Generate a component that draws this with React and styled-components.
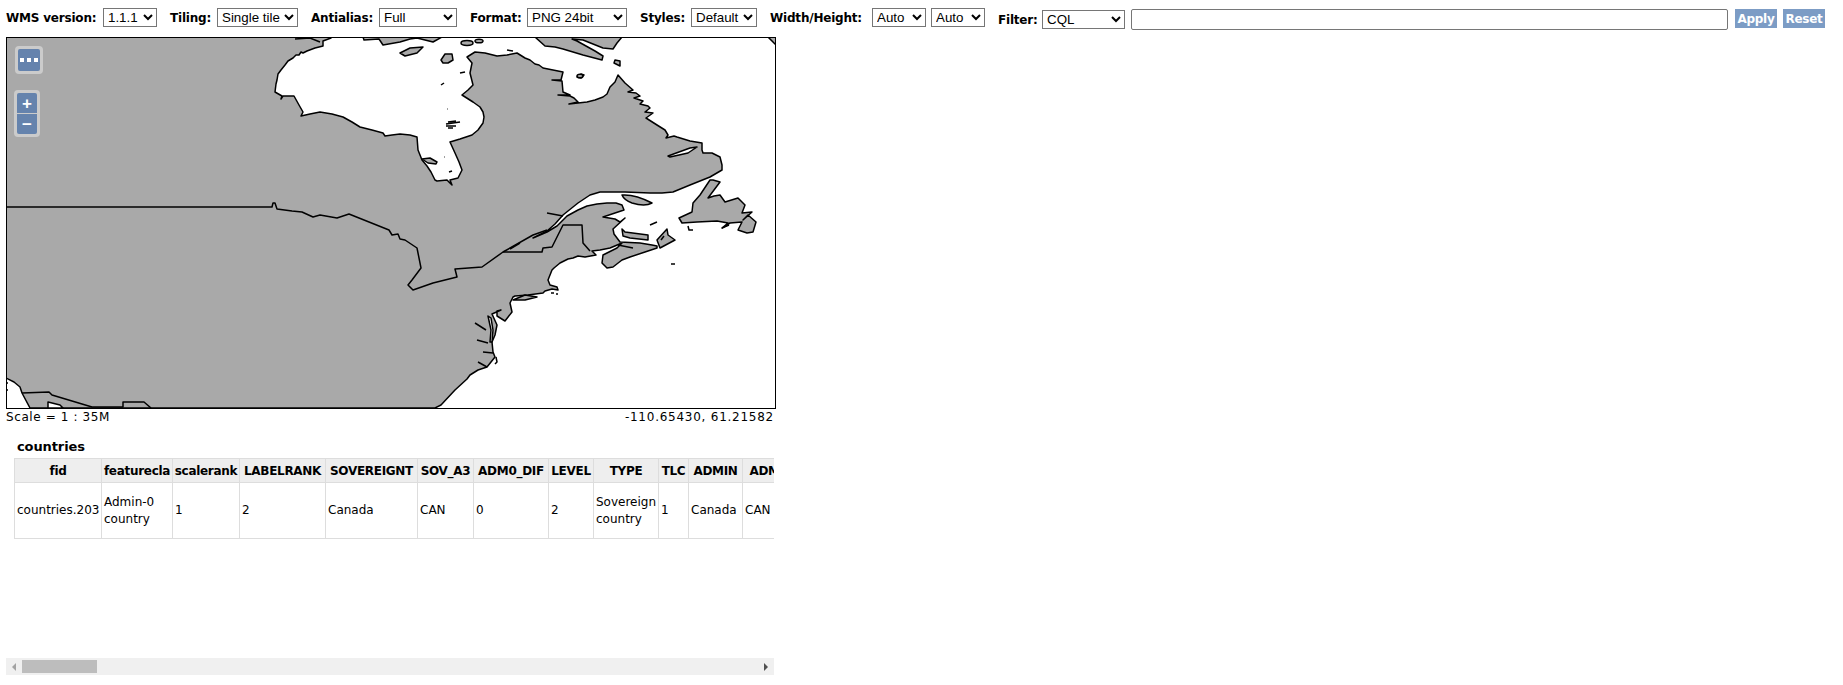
import React from 'react';
import styled, { createGlobalStyle } from 'styled-components';

const GlobalStyle = createGlobalStyle`
  html, body {
    margin: 0;
    background: #fff;
    color: #000;
    font-family: "DejaVu Sans", Verdana, sans-serif;
  }
`;

const Page = styled.div`
  width: 1843px;
  height: 685px;
  overflow: hidden;
`;

const Toolbar = styled.form`
  display: flex;
  align-items: flex-start;
  height: 37px;
  padding: 8px 0 0 6px;
  box-sizing: border-box;
`;

const Field = styled.div`
  display: flex;
  align-items: center;
  gap: 5px;
  margin-right: ${props => props.$gap ?? 13}px;
  margin-top: ${props => props.$top ?? 0}px;
`;

const Label = styled.label`
  width: ${props => props.$w}px;
  font-size: 12px;
  font-weight: bold;
  white-space: nowrap;
  letter-spacing: -0.2px;
`;

const Select = styled.select`
  width: ${props => props.$w}px;
  height: 19px;
  padding: 0;
  box-sizing: border-box;
  background: #fff;
  font-family: "Liberation Sans", Arial, sans-serif;
  font-size: 13.33px;
`;

const FilterInput = styled.input`
  width: 597px;
  height: 21px;
  margin: 1px 7px 0 1px;
  padding: 0 2px;
  box-sizing: border-box;
  border: 1px solid #767676;
  border-radius: 2px;
`;

const FormButton = styled.button`
  width: 42px;
  height: 19px;
  margin: 1px 6px 0 0;
  padding: 0;
  border: 0;
  background: #7c9cc5;
  color: #fff;
  font-family: "DejaVu Sans", Verdana, sans-serif;
  font-size: 12px;
  font-weight: bold;
  letter-spacing: -0.3px;
`;

const MapFrame = styled.div`
  position: relative;
  width: 768px;
  height: 370px;
  margin-left: 6px;
  border: 1px solid #000;
`;

const MapDrawing = styled.svg`
  display: block;
  width: 768px;
  height: 370px;
`;

const Control = styled.div`
  position: absolute;
  left: ${props => props.$left}px;
  top: ${props => props.$top}px;
  display: flex;
  flex-direction: column;
  gap: 1px;
  padding: 3px;
  border-radius: 4px;
  background: rgba(255, 255, 255, 0.4);
`;

const ControlButton = styled.button`
  display: flex;
  align-items: center;
  justify-content: center;
  gap: 3px;
  width: ${props => props.$w ?? 20}px;
  height: ${props => props.$h ?? 20}px;
  padding: 0;
  border: 0;
  border-radius: ${props => props.$radius ?? '2px'};
  background: #6583ad;
  color: #fff;
  font-family: "Liberation Sans", Arial, sans-serif;
  font-size: 17px;
  font-weight: bold;
  line-height: 1;
`;

const Dot = styled.span`
  width: 4px;
  height: 4px;
  background: #fff;
`;

const StatusRow = styled.div`
  display: flex;
  justify-content: space-between;
  width: 768px;
  height: 29px;
  margin-left: 6px;
  padding-top: 1px;
  box-sizing: border-box;
  font-size: 12px;
`;

const StatusText = styled.span`
  letter-spacing: ${props => props.$spacing}px;
`;

const Results = styled.div`
  width: 760px;
  height: 220px;
  margin-left: 14px;
  overflow: hidden;
`;

const ResultsTitle = styled.h3`
  height: 20px;
  margin: 0 0 0 3px;
  font-size: 13px;
  line-height: 17px;
  letter-spacing: -0.1px;
`;

const DataTable = styled.table`
  table-layout: fixed;
  width: ${props => props.$w}px;
  border-collapse: collapse;
  font-size: 12px;
`;

const HeadCell = styled.th`
  width: ${props => props.$w}px;
  height: 24px;
  padding: 0 1px;
  box-sizing: border-box;
  border: 1px solid #ddd;
  background: #eee;
  text-align: center;
  white-space: nowrap;
  letter-spacing: -0.3px;
  overflow: hidden;
`;

const BodyCell = styled.td`
  height: 56px;
  padding: 0 2px;
  box-sizing: border-box;
  border: 1px solid #ddd;
  line-height: 17px;
  overflow: hidden;
`;

const Scrollbar = styled.div`
  display: flex;
  align-items: center;
  justify-content: space-between;
  width: 768px;
  height: 17px;
  margin-left: 6px;
  background: #f0f0f0;
`;

const ScrollThumb = styled.div`
  width: 75px;
  height: 13px;
  margin-left: 6px;
  background: #bdbdbd;
`;

const ScrollArrow = styled.span`
  width: 0;
  height: 0;
  border-top: 4px solid transparent;
  border-bottom: 4px solid transparent;
  ${props => props.$dir === 'left'
    ? 'margin-left: 6px; border-right: 4px solid #a3a3a3;'
    : 'margin-right: 6px; border-left: 4px solid #505050;'}
`;

const ScrollStart = styled.div`
  display: flex;
  align-items: center;
`;

const columns = [
  { name: 'fid', width: 87, value: 'countries.203' },
  { name: 'featurecla', width: 71, value: 'Admin-0 country' },
  { name: 'scalerank', width: 67, value: '1' },
  { name: 'LABELRANK', width: 86, value: '2' },
  { name: 'SOVEREIGNT', width: 92, value: 'Canada' },
  { name: 'SOV_A3', width: 56, value: 'CAN' },
  { name: 'ADM0_DIF', width: 75, value: '0' },
  { name: 'LEVEL', width: 45, value: '2' },
  { name: 'TYPE', width: 65, value: 'Sovereign country' },
  { name: 'TLC', width: 30, value: '1' },
  { name: 'ADMIN', width: 54, value: 'Canada' },
  { name: 'ADM0_A3', width: 75, value: 'CAN' },
];

const tableWidth = columns.reduce((sum, col) => sum + col.width, 0);

const LAND = `M6 37 L327 37 L331 38 L323 41 L323 46 L315 48 L307 51 L303 53 L301 52 L299 55 L296 55 L293 58 L288 61 L285 65 L281 70 L278 74
  L277 80 L276 84 L275 92 L282 96 L281 99 L283 96 L294 96 L299 105 L303 112 L301 116 L310 114 L320 112 L332 114 L343 117 L352 122 L360 127
  L372 130 L383 133 L385 136 L392 135 L400 134 L410 135 L417 137 L418 150 L422 160 L427 166 L431 172 L435 180 L437 181 L447 180 L452 185
  L450 180 L458 178 L462 170 L459 162 L455 153 L450 142 L460 139 L472 135 L478 130 L483 123 L484 117 L483 112 L480 107 L473 102 L462 95
  L468 90 L473 85 L470 73 L472 63 L467 57 L475 52 L485 53 L497 56 L507 55 L517 53 L525 58 L530 60 L535 64 L539 65 L543 68 L553 70 L563 72
  L561 80 L552 80 L562 81 L563 92 L570 95 L558 95 L570 96 L574 98 L578 102 L569 104 L578 103 L587 102 L595 100 L603 97 L607 94 L610 87
  L615 82 L618 75 L625 83 L633 90 L628 92 L636 93 L640 96 L634 98 L643 101 L640 104 L648 106 L650 108 L645 112 L653 113 L646 118 L657 125
  L665 130 L668 135 L666 138 L674 136 L677 137 L690 141 L702 143 L702 150 L703 153 L712 153 L720 157 L722 165 L722 170 L710 177 L690 185
  L673 192 L662 193 L650 193 L625 192 L600 192 L590 195 L578 203 L563 215 L555 224 L547 231 L533 238 L547 232 L557 226 L567 216 L578 210
  L587 206 L597 204 L607 203 L616 203 L622 205 L624 210 L612 214 L603 217 L615 219 L620 222 L625 218 L613 229 L614 234 L620 242 L640 243
  L652 245 L657 246 L657 248 L645 252 L630 257 L622 260 L613 267 L607 268 L602 263 L603 255 L617 248 L622 243 L610 248 L600 250 L592 251
  L596 255 L585 257 L578 256 L573 258 L568 259 L560 263 L554 268 L552 270 L548 280 L550 285 L557 287 L558 290 L552 289 L545 291 L543 293
  L528 295 L515 296 L513 297 L510 303 L512 312 L505 321 L497 316 L497 311 L501 310 L492 314 L497 325 L495 335 L492 342 L493 352 L495 357
  L487 367 L478 370 L470 375 L467 379 L455 390 L441 405 L435 408 L30 408 L22 393 L20 387 L14 382 L6 378 Z`;

const BAFFIN = `M535 37 L545 46 L555 47 L563 49 L583 55 L602 60 L603 56 L595 51 L577 41 L572 39 L583 40 L603 48 L613 49 L617 43 L622 37 Z`;
const SOUTHAMPTON = `M363 37 L364 40 L379 39 L383 45 L400 42 L410 39 L417 38 L433 42 L442 37 Z`;
const NEWFOUNDLAND = `M710 180 L713 180 L720 182 L714 190 L708 198 L714 196 L720 195 L725 202 L738 198 L745 205 L742 213 L752 212 L743 220 L748 215
  L756 222 L753 232 L747 233 L738 230 L742 222 L730 223 L722 228 L728 223 L717 221 L697 222 L682 223 L679 218 L692 212 L693 203 L700 195 Z`;

// gray islands, page coordinates
const islands = [
  'M400 53 L410 48 L423 47 L417 53 L405 56 Z',
  'M441 60 L445 54 L452 54 L453 60 L448 63 L443 63 Z',
  'M422 159 L430 158 L437 162 L436 164 L428 163 Z',
  'M622 195 Q635 194 652 203 Q645 207 632 203 Q624 200 622 195 Z',
  'M622 229 L625 232 L648 235 L648 240 L630 238 L623 236 Z',
  'M657 240 L667 229 L668 235 L675 240 L660 248 Z',
  'M513 300 L525 295 L537 297 L525 300 Z',
  'M615 60 L620 61 L620 66 L614 63 Z',
  'M577 77 L581 74 L584 75 L581 78 Z',
  'M768 37 L776 37 L776 45 Z',
];

// water cut into the land
const inlets = [
  'M668 156 L690 148 L697 147 L688 153 L670 157 Z',
  'M488 316 L491 330 L490 342 L492 342 L493 330 L491 318 Z',
  'M48 408 L48 402 L60 405 L63 408 Z',
];

const lines = [
  // 49th parallel and the Great Lakes border
  'M6 207 L272 207 L273 203 L275 203 L277 209 L292 211 L302 212 L313 217 L320 215 L337 218 L349 214 L389 230 L392 235 L398 234 L400 239 L405 240 L417 248 L421 268 L412 280 L408 285 L413 290 L433 283 L457 277 L455 269 L482 267 L503 252 L542 252 L543 248 L552 247 L563 225 L582 225 L583 243 L590 251',
  'M503 252 L533 235 L547 230',
  'M510 249 L520 243',
  'M547 213 L563 216',
  // south west corner
  'M22 393 L49 392 L52 395 L92 407 L123 407 L123 402 L144 402 L151 408',
  // small islands drawn as dashes
  'M460 73 L465 72',
  'M441 85 L444 83',
  'M507 50 L513 51',
  'M650 225 L657 222',
  'M671 264 L675 264',
  'M551 293 L554 293',
  'M556 294 L558 294',
  'M446 124 L460 122 M446 126 L456 126 M448 122 L456 121 M448 128 L453 128',
  'M447 109 L447.5 109',
  'M444 157 L444.5 157',
  'M449 172 L452 171',
  'M661 240 L664 236',
  'M618 245 L633 248',
  'M7 383 L8 383 M7 390 L8 390',
  'M295 39 L310 38 L320 42',
  'M486 330 L475 323 M488 343 L477 340 M493 353 L483 352 M487 367 L478 362',
  'M496 357 L497 362 L495 364',
  'M722 228 L729 225 M693 230 L689 230 L688 226',
];

const App = () => (
  <Page>
    <GlobalStyle />
    <Toolbar>
      <Field>
        <Label $w={92}>WMS version:</Label>
        <Select $w={54}><option>1.1.1</option></Select>
      </Field>
      <Field>
        <Label $w={42}>Tiling:</Label>
        <Select $w={81}><option>Single tile</option></Select>
      </Field>
      <Field>
        <Label $w={63}>Antialias:</Label>
        <Select $w={78}><option>Full</option></Select>
      </Field>
      <Field>
        <Label $w={52}>Format:</Label>
        <Select $w={100}><option>PNG 24bit</option></Select>
      </Field>
      <Field>
        <Label $w={46}>Styles:</Label>
        <Select $w={66}><option>Default</option></Select>
      </Field>
      <Field>
        <Label $w={97}>Width/Height:</Label>
        <Select $w={54}><option>Auto</option></Select>
        <Select $w={54}><option>Auto</option></Select>
      </Field>
      <Field $top={2} $gap={5}>
        <Label $w={39}>Filter:</Label>
        <Select $w={83}><option>CQL</option></Select>
      </Field>
      <FilterInput type="text" />
      <FormButton type="button">Apply</FormButton>
      <FormButton type="button">Reset</FormButton>
    </Toolbar>

    <MapFrame>
      <MapDrawing viewBox="7 38 768 370">
        <g fill="#a9a9a9" stroke="#000" strokeWidth="1.5" strokeLinejoin="round">
          <path d={LAND} />
          <path d={BAFFIN} />
          <path d={SOUTHAMPTON} />
          <path d={NEWFOUNDLAND} />
          {islands.map(d => <path key={d} d={d} />)}
          <ellipse cx="467" cy="43" rx="6" ry="2.4" />
          <ellipse cx="479" cy="41" rx="4" ry="1.8" />
          <ellipse cx="580" cy="76" rx="3" ry="1.8" />
        </g>
        <g fill="#fff" stroke="#000" strokeWidth="1.5" strokeLinejoin="round">
          {inlets.map(d => <path key={d} d={d} />)}
        </g>
        <g fill="none" stroke="#000" strokeWidth="1.5" strokeLinejoin="round">
          {lines.map(d => <path key={d} d={d} />)}
        </g>
      </MapDrawing>
      <Control $left={8} $top={8}>
        <ControlButton $w={22} $h={22}>
          <Dot /><Dot /><Dot />
        </ControlButton>
      </Control>
      <Control $left={7} $top={52}>
        <ControlButton $radius="2px 2px 0 0">+</ControlButton>
        <ControlButton $radius="0 0 2px 2px">−</ControlButton>
      </Control>
    </MapFrame>

    <StatusRow>
      <StatusText $spacing={0.6}>Scale = 1 : 35M</StatusText>
      <StatusText $spacing={0.75}>-110.65430, 61.21582</StatusText>
    </StatusRow>

    <Results>
      <ResultsTitle>countries</ResultsTitle>
      <DataTable $w={tableWidth}>
        <thead>
          <tr>
            {columns.map(col => <HeadCell key={col.name} $w={col.width}>{col.name}</HeadCell>)}
          </tr>
        </thead>
        <tbody>
          <tr>
            {columns.map(col => <BodyCell key={col.name}>{col.value}</BodyCell>)}
          </tr>
        </tbody>
      </DataTable>
    </Results>

    <Scrollbar>
      <ScrollStart>
        <ScrollArrow $dir="left" />
        <ScrollThumb />
      </ScrollStart>
      <ScrollArrow $dir="right" />
    </Scrollbar>
  </Page>
);

export default App;
